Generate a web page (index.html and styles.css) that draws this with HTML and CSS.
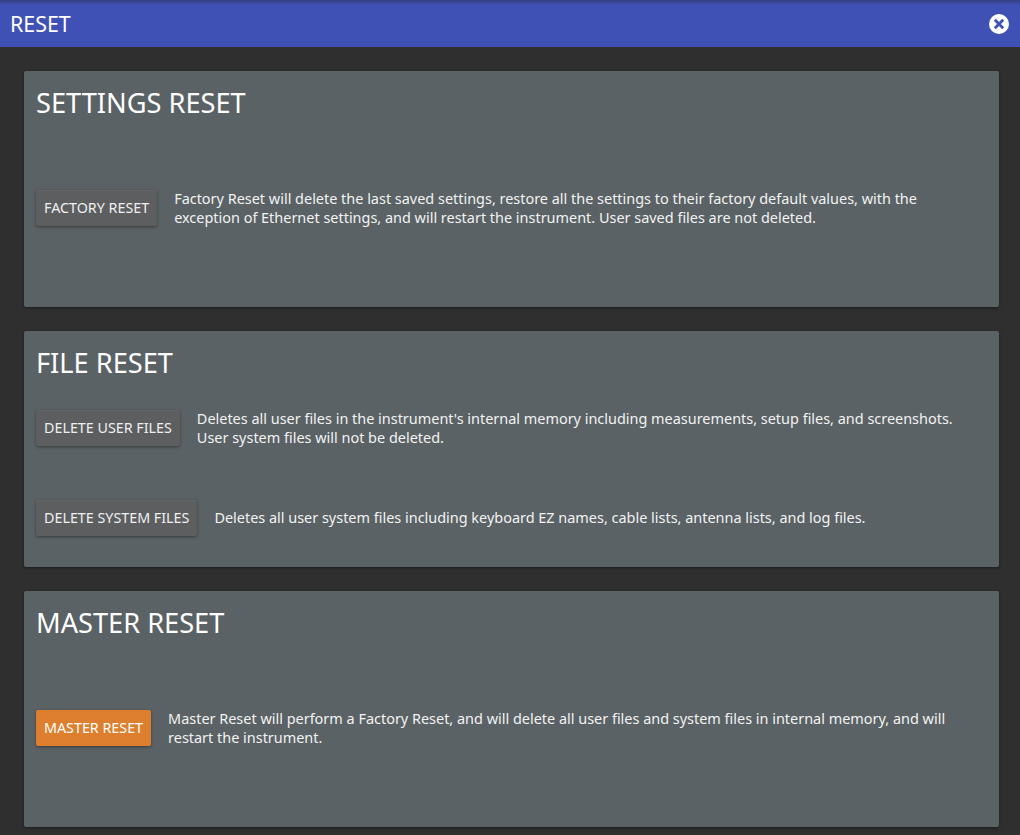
FILE: index.html
```html
<!DOCTYPE html>
<html lang="en">
<head>
<meta charset="utf-8">
<title>Reset</title>
<link rel="stylesheet" href="styles.css">
</head>
<body>
<header class="topbar">
  <span class="topbar-title">RESET</span>
  <button class="close" aria-label="Close">
    <svg width="20" height="20" viewBox="0 0 20 20"><circle cx="10" cy="10" r="10" fill="#fff"/><path d="M5.8 5.8l8.4 8.4M14.2 5.8l-8.4 8.4" stroke="#3f51b5" stroke-width="2.8" fill="none"/></svg>
  </button>
</header>
<main class="content">
  <section class="card">
    <h2 class="card-title">SETTINGS RESET</h2>
    <div class="rows rows-single">
      <div class="row">
        <button class="btn">FACTORY RESET</button>
        <p class="desc">Factory Reset will delete the last saved settings, restore all the settings to their factory default values, with the exception of Ethernet settings, and will restart the instrument. User saved files are not deleted.</p>
      </div>
    </div>
  </section>
  <section class="card">
    <h2 class="card-title">FILE RESET</h2>
    <div class="rows rows-double">
      <div class="row">
        <button class="btn">DELETE USER FILES</button>
        <p class="desc">Deletes all user files in the instrument's internal memory including measurements, setup files, and screenshots. User system files will not be deleted.</p>
      </div>
      <div class="row">
        <button class="btn">DELETE SYSTEM FILES</button>
        <p class="desc desc-one">Deletes all user system files including keyboard EZ names, cable lists, antenna lists, and log files.</p>
      </div>
    </div>
  </section>
  <section class="card">
    <h2 class="card-title">MASTER RESET</h2>
    <div class="rows rows-single">
      <div class="row">
        <button class="btn btn-warn">MASTER RESET</button>
        <p class="desc">Master Reset will perform a Factory Reset, and will delete all user files and system files in internal memory, and will restart the instrument.</p>
      </div>
    </div>
  </section>
</main>
</body>
</html>
```
FILE: styles.css
```css
* { box-sizing: border-box; }
html, body { margin: 0; height: 100%; }
body {
  background: #2f2f2f;
  color: #f2f2f2;
  font-family: "Noto Sans", sans-serif;
  overflow: hidden;
}
.topbar {
  height: 47px;
  background: linear-gradient(#34407f 0, #3f51b5 5px);
  display: flex;
  align-items: center;
  justify-content: space-between;
  padding: 0 11px 0 10px;
}
.topbar-title { font-size: 21.4px; color: #fff; }
.close {
  border: 0;
  background: none;
  padding: 0;
  width: 20px;
  height: 20px;
  display: block;
}
.close svg { display: block; }
.content {
  padding: 24px 21px 0 24px;
  display: flex;
  flex-direction: column;
  gap: 24px;
}
.card {
  height: 236px;
  background: #5a6265;
  border-radius: 2px;
  padding: 12px;
  box-shadow: 0 1px 3px rgba(0, 0, 0, 0.4);
}
.card-title {
  margin: 0;
  height: 40px;
  font-size: 27.2px;
  font-weight: 400;
  line-height: 40px;
  color: #fff;
}
.rows { display: flex; flex-direction: column; gap: 52px; }
.rows-single { padding-top: 66px; }
.rows-double { padding-top: 26px; }
.row { display: flex; align-items: center; gap: 17px; min-height: 38px; }
.btn {
  flex: none;
  height: 36px;
  padding: 0 8px 1px;
  font: 14.3px "Noto Sans", sans-serif;
  color: #f0f0f0;
  background: #5c5e60;
  border: 0;
  border-radius: 2px;
  box-shadow: inset 0 1px 0 rgba(255, 255, 255, 0.05), 0 1px 3px rgba(0, 0, 0, 0.4);
}
.btn-warn { background: #dd7f2e; color: #fff; box-shadow: 0 1px 3px rgba(0, 0, 0, 0.4); }
.desc { margin: 0; padding-right: 12px; font-size: 14.45px; line-height: 19px; }
.desc-one { margin-bottom: 2px; }
```
